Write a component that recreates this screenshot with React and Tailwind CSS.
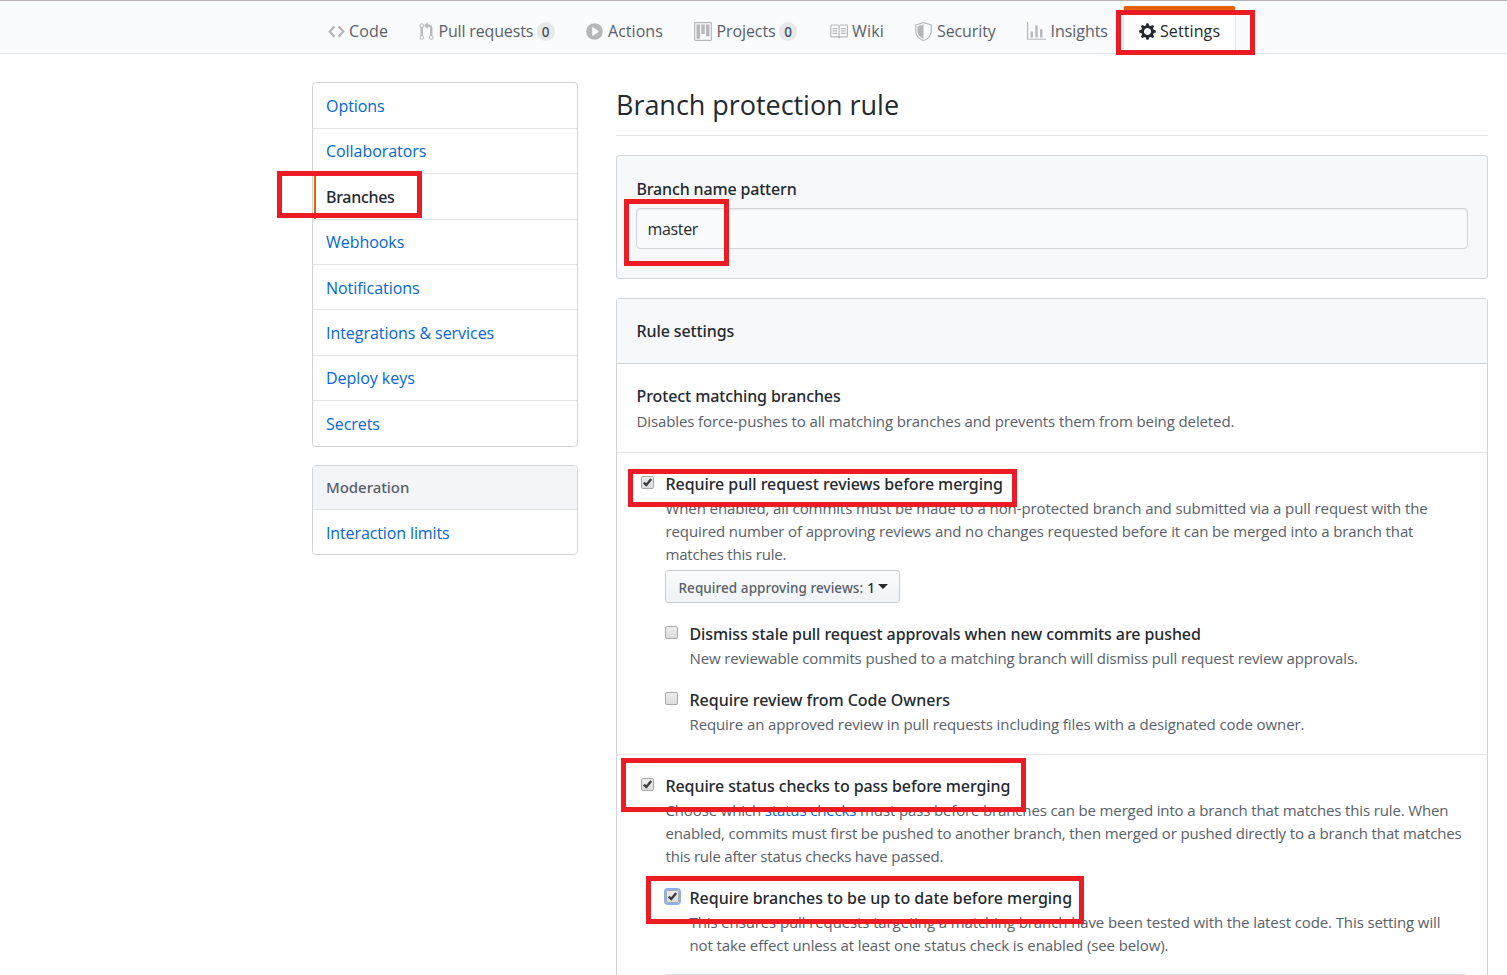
import React from 'react';

const ICONS = {
  code: [14, 'M9.5 3L8 4.5 11.5 8 8 11.5 9.5 13 14 8 9.5 3zm-5 0L0 8l4.5 5L6 11.5 2.5 8 6 4.5 4.5 3z'],
  pull: [12, 'M11 11.28V5c-.03-.78-.34-1.47-.94-2.06C9.46 2.35 8.78 2.03 8 2H7V0L4 3l3 3V4h1c.27.02.48.11.69.31.21.2.3.42.31.69v6.28A1.993 1.993 0 0010 15a1.993 1.993 0 001-3.72zm-1 2.92c-.66 0-1.2-.55-1.2-1.2 0-.65.55-1.2 1.2-1.2.65 0 1.2.55 1.2 1.2 0 .65-.55 1.2-1.2 1.2zM4 3c0-1.11-.89-2-2-2a1.993 1.993 0 00-1 3.72v6.56A1.993 1.993 0 002 15a1.993 1.993 0 001-3.72V4.72c.59-.34 1-.98 1-1.72zm-.8 10c0 .66-.55 1.2-1.2 1.2-.65 0-1.2-.55-1.2-1.2 0-.65.55-1.2 1.2-1.2.65 0 1.2.55 1.2 1.2zM2 4.2C1.34 4.2.8 3.65.8 3c0-.65.55-1.2 1.2-1.2.65 0 1.2.55 1.2 1.2 0 .65-.55 1.2-1.2 1.2z'],
  play: [14, 'M14 8A7 7 0 110 8a7 7 0 0114 0zm-8.223 3.482l4.599-3.066a.5.5 0 000-.832L5.777 4.518A.5.5 0 005 4.934v6.132a.5.5 0 00.777.416z'],
  project: [15, 'M10 12h3V2h-3v10zm-4-2h3V2H6v8zm-4 4h3V2H2v12zm-1 1h13V1H1v14zM14 0H1a1 1 0 00-1 1v14a1 1 0 001 1h13a1 1 0 001-1V1a1 1 0 00-1-1z'],
  book: [16, 'M3 5h4v1H3V5zm0 3h4V7H3v1zm0 2h4V9H3v1zm11-5h-4v1h4V5zm0 2h-4v1h4V7zm0 2h-4v1h4V9zm2-6v9c0 .55-.45 1-1 1H9.5l-1 1-1-1H2c-.55 0-1-.45-1-1V3c0-.55.45-1 1-1h5.5l1 1 1-1H15c.55 0 1 .45 1 1zm-8 .5L7.5 3H2v9h6V3.5zm7-.5H9.5l-.5.5V12h6V3z'],
  shield: [14, 'M0 2l7-2 7 2v6.02C14 12.69 8.69 16 7 16c-1.69 0-7-3.31-7-7.98V2zm1 .75L7 1l6 1.75v5.268C13 12.104 8.449 15 7 15c-1.449 0-6-2.896-6-6.982V2.75zm1 .75L7 2v12c-1.207 0-5-2.482-5-5.985V3.5z'],
  graph: [16, 'M16 14v1H0V0h1v14h15zM5 13H3V8h2v5zm4 0H7V3h2v10zm4 0h-2V6h2v7z'],
  gear: [14, 'M14 8.77v-1.6l-1.94-.64-.45-1.09.88-1.84-1.13-1.13-1.81.91-1.09-.45-.69-1.92h-1.6l-.63 1.94-1.11.45-1.84-.88-1.13 1.13.91 1.81-.45 1.09L0 7.23v1.59l1.94.64.45 1.09-.88 1.84 1.13 1.13 1.81-.91 1.09.45.69 1.92h1.59l.63-1.94 1.11-.45 1.84.88 1.13-1.13-.92-1.81.47-1.09L14 8.75v.02zM7 11c-1.66 0-3-1.34-3-3s1.34-3 3-3 3 1.34 3 3-1.34 3-3 3z'],
};

function Icon({ name, className }) {
  const [w, d] = ICONS[name];
  return (
    <svg viewBox={`0 0 ${w} 16`} className={`h-[19px] shrink-0 ${className}`} fill="currentColor" fillRule="evenodd" aria-hidden="true">
      <path fillRule="evenodd" d={d} />
    </svg>
  );
}

const TABS = [
  { icon: 'code', label: 'Code', slot: 'w-[91px]', size: 'w-[17px]', gap: 'ml-1', track: 'tracking-[0.15px]' },
  { icon: 'pull', label: 'Pull requests', count: 0, slot: 'w-[167px]', size: 'w-[15px]', gap: 'ml-[4.5px]', track: 'tracking-[-0.16px]' },
  { icon: 'play', label: 'Actions', slot: 'w-[108px]', size: 'w-[17px]', gap: 'ml-[5px]', track: 'tracking-[0.03px]' },
  { icon: 'project', label: 'Projects', count: 0, slot: 'w-[134.5px]', size: 'w-[18px]', gap: 'ml-[4.5px]', track: 'tracking-[-0.1px]' },
  { icon: 'book', label: 'Wiki', slot: 'w-[86.5px]', size: 'w-[19px]', gap: 'ml-[4.5px]', track: 'tracking-[0.2px]' },
  { icon: 'shield', label: 'Security', slot: 'w-[112px]', size: 'w-[17px]', gap: 'ml-[5px]', track: 'tracking-[-0.1px]' },
  { icon: 'graph', label: 'Insights', slot: 'w-[97px]', size: 'w-[19px]', gap: 'ml-[4.5px]', track: 'tracking-[-0.05px]' },
];

function Nav() {
  return (
    <nav className="flex h-[54px] border-t border-b border-t-[#b7b1b5] border-b-[#e1e4e8] bg-[#fafbfc] pl-[328px] text-[16px] leading-[24px] text-[#586069]">
      {TABS.map((t) => (
        <div key={t.label} className={`flex shrink-0 items-center pt-2 ${t.slot}`}>
          <Icon name={t.icon} className={`text-[#b5b8bb] ${t.size}`} />
          <span className={`whitespace-nowrap ${t.gap} ${t.track}`}>{t.label}</span>
          {t.count !== undefined && (
            <span className="ml-[3.5px] flex h-[19px] w-[18px] items-center justify-center rounded-full bg-[#e7e8ea] pt-px font-['Noto_Sans',sans-serif] text-[13.5px] font-medium text-[#444d56]">
              {t.count}
            </span>
          )}
        </div>
      ))}
      <div className="-mb-px mt-[5px] -ml-px flex w-[113px] shrink-0 items-center rounded-t-[3px] border-t-4 border-r border-l border-t-[#e36209] border-r-[#e1e4e8] border-l-[#e1e4e8] bg-white pb-[2px] pl-[15px] text-[#24292e]">
        <Icon name="gear" className="w-[17px]" />
        <span className="ml-1 pb-px tracking-[0.1px]">Settings</span>
      </div>
    </nav>
  );
}

const MENU = [
  ['Options', 'h-[46px] pt-px'],
  ['Collaborators', 'h-[45px] pb-px'],
  ['Branches', 'h-[46px]'],
  ['Webhooks', 'h-[45px] pb-px'],
  ['Notifications', 'h-[45px] pt-px'],
  ['Integrations & services', 'h-[46px] pt-px'],
  ['Deploy keys', 'h-[45px] pb-px'],
  ['Secrets', 'h-[45px] pt-px'],
];

function Sidebar() {
  return (
    <aside className="w-[266px] shrink-0 text-[16px] leading-[24px] tracking-[-0.05px]">
      <ul className="rounded-[4px] border border-[#d1d5da] bg-white">
        {MENU.map(([m, h]) => (
          <li key={m} className={`flex items-center border-b border-[#e1e4e8] pl-[13px] last:border-b-0 ${h}`}>
            {m === 'Branches' ? (
              <span className="-ml-[12px] flex h-[45px] items-center border-l-2 border-[#e36209] pt-px pl-[10px] font-['Noto_Sans',sans-serif] font-medium tracking-[-0.3px] text-[#24292e]">
                {m}
              </span>
            ) : (
              <a className="text-[#0366d6]">{m}</a>
            )}
          </li>
        ))}
      </ul>
      <div className="mt-[18px] rounded-[4px] border border-[#d1d5da] bg-white">
        <div className="flex h-[44px] items-center rounded-t-[3px] border-b border-[#e1e4e8] bg-[#f3f5f8] pb-px pl-[13px] font-['Noto_Sans',sans-serif] text-[15px] font-medium tracking-[-0.05px] text-[#586069]">
          Moderation
        </div>
        <div className="flex h-[44px] items-center pl-[13px] text-[#0366d6]">
          <a className="pt-0.5 tracking-[-0.12px]">Interaction limits</a>
        </div>
      </div>
    </aside>
  );
}

function Checkbox({ checked, focused }) {
  return (
    <span
      className={`mt-[5px] flex size-[13px] shrink-0 items-center justify-center rounded-[2px] border border-[#a9a9a9] bg-linear-to-b from-[#ededed] to-[#dcdcdc] ${
        focused ? 'ml-px -mr-px outline-2 outline-[#8ab0f2]' : ''
      }`}
    >
      {checked && (
        <svg viewBox="0 0 11 11" className="size-[11px]" aria-hidden="true">
          <path d="M1.8 5.6l2.5 2.4L9.2 2" fill="none" stroke="#3c4043" strokeWidth="2.4" />
        </svg>
      )}
    </span>
  );
}

function Title({ children, className = '' }) {
  return (
    <div className={`h-[26px] font-['Noto_Sans',sans-serif] text-[16px] leading-[26px] font-medium whitespace-nowrap text-[#24292e] ${className}`}>
      {children}
    </div>
  );
}

function Lines({ lines }) {
  return (
    <div className="text-[15px] leading-[23px] tracking-[-0.11px] whitespace-nowrap text-[#586069]">
      {lines.map((l, i) => (
        <div key={i}>{l}</div>
      ))}
    </div>
  );
}

function Option({ checked, focused, title, track = 'tracking-[-0.07px]', lines, className = '', children }) {
  return (
    <div className={`flex gap-[11px] ${className}`}>
      <Checkbox checked={checked} focused={focused} />
      <div className="min-w-0 flex-1">
        <div className="pl-[0.5px]">
          <Title className={track}>{title}</Title>
          <Lines lines={lines} />
        </div>
        {children}
      </div>
    </div>
  );
}

function Main() {
  return (
    <main className="w-[872px] shrink-0">
      <h1 className="h-[54px] border-b border-[#e1e4e8] pt-[5px] text-[27px] leading-[36px] tracking-[-0.04px] text-[#24292e]">
        Branch protection rule
      </h1>
      <section className="mt-[19px] h-[124px] rounded-[3px] border border-[#d1d5da] bg-[#f6f8fa] px-[19px] pt-5">
        <Title className="pl-[0.5px] tracking-[-0.16px]">Branch name pattern</Title>
        <div className="mt-[6px] flex h-[41px] items-center rounded-[4px] border border-[#d1d5da] bg-[#fafbfc] pl-[10.5px] text-[16px] tracking-[-0.35px] text-[#24292e] shadow-[inset_0_1px_2px_rgba(27,31,35,0.075)]">
          master
        </div>
      </section>
      <section className="mt-[19px] h-[700px] rounded-t-[3px] border border-[#d1d5da] bg-white">
        <div className="flex h-[65px] items-center border-b border-[#d1d5da] bg-[#f6f8fa] pl-[19.5px]">
          <Title className="tracking-[-0.1px]">Rule settings</Title>
        </div>
        <div className="h-[89px] border-b border-[#e1e4e8] pt-[19px] pl-[19.5px]">
          <Title className="mb-px tracking-[-0.1px]">Protect matching branches</Title>
          <Lines lines={['Disables force-pushes to all matching branches and prevents them from being deleted.']} />
        </div>
        <div className="h-[302px] border-b border-[#e1e4e8] pt-[18px] pl-6">
          <Option
            checked
            title="Require pull request reviews before merging"
            lines={[
              <span key="a" className="tracking-[-0.09px]">
                When enabled, all commits must be made to a non-protected branch and submitted via a pull request with the
              </span>,
              'required number of approving reviews and no changes requested before it can be merged into a branch that',
              <span key="c" className="tracking-[-0.2px]">matches this rule.</span>,
            ]}
          >
            <button className="mt-1 flex h-[33px] w-[235px] items-center rounded-[3px] border border-[#c9ccd0] bg-linear-to-b from-[#fafbfc] to-[#eff3f6] pt-[3px] pl-[12.5px] font-['Noto_Sans',sans-serif] text-[13.5px] font-medium tracking-[0.06px] whitespace-nowrap text-[#24292e]">
              <span className="text-[#586069]">Required approving reviews:</span>
              <span className="ml-1">1</span>
              <span className="mb-[3px] ml-[2.5px] border-x-[5px] border-t-[5px] border-x-transparent border-t-[#24292e]" />
            </button>
            <Option
              className="mt-[18px]"
              title="Dismiss stale pull request approvals when new commits are pushed"
              track="tracking-[-0.08px]"
              lines={[
                <span key="a" className="tracking-[-0.13px]">
                  New reviewable commits pushed to a matching branch will dismiss pull request review approvals.
                </span>,
              ]}
            />
            <Option
              className="mt-[17px]"
              title="Require review from Code Owners"
              track="tracking-[-0.02px]"
              lines={['Require an approved review in pull requests including files with a designated code owner.']}
            />
          </Option>
        </div>
        <div className="pt-[18px] pl-6">
          <Option
            checked
            title="Require status checks to pass before merging"
            track="tracking-[-0.09px]"
            lines={[
              <span key="a" className="tracking-[-0.14px]">
                Choose which <a className="text-[#0366d6]">status checks</a> must pass before branches can be merged into a branch that matches this rule. When
              </span>,
              <span key="b" className="tracking-[-0.14px]">
                enabled, commits must first be pushed to another branch, then merged or pushed directly to a branch that matches
              </span>,
              <span key="c" className="tracking-[-0.2px]">this rule after status checks have passed.</span>,
            ]}
          >
            <Option
              checked
              focused
              className="mt-[17px]"
              title="Require branches to be up to date before merging"
              track="tracking-[-0.02px]"
              lines={[
                'This ensures pull requests targeting a matching branch have been tested with the latest code. This setting will',
                'not take effect unless at least one status check is enabled (see below).',
              ]}
            />
            <div className="mt-[17px] mr-[19px] h-6 rounded-t-[3px] border border-[#e1e4e8]" />
          </Option>
        </div>
      </section>
    </main>
  );
}

const MARKS = [
  'left-[1116px] top-[10px] h-[45px] w-[139px]',
  'left-[277px] top-[171px] h-[47px] w-[145px]',
  'left-[624px] top-[199px] h-[67px] w-[105px]',
  'left-[628px] top-[469px] h-[38px] w-[389px]',
  'left-[621px] top-[758px] h-[54px] w-[405px]',
  'left-[646px] top-[876px] h-[48px] w-[438px]',
];

export default function App() {
  return (
    <div className="relative h-[975px] w-[1507px] overflow-hidden bg-white font-['Open_Sans',sans-serif]">
      <Nav />
      <div className="flex gap-[38px] pt-[28px] pl-[312px]">
        <Sidebar />
        <Main />
      </div>
      {MARKS.map((m) => (
        <div key={m} className={`absolute border-[5px] border-[#ed1c24] ${m}`} />
      ))}
    </div>
  );
}
